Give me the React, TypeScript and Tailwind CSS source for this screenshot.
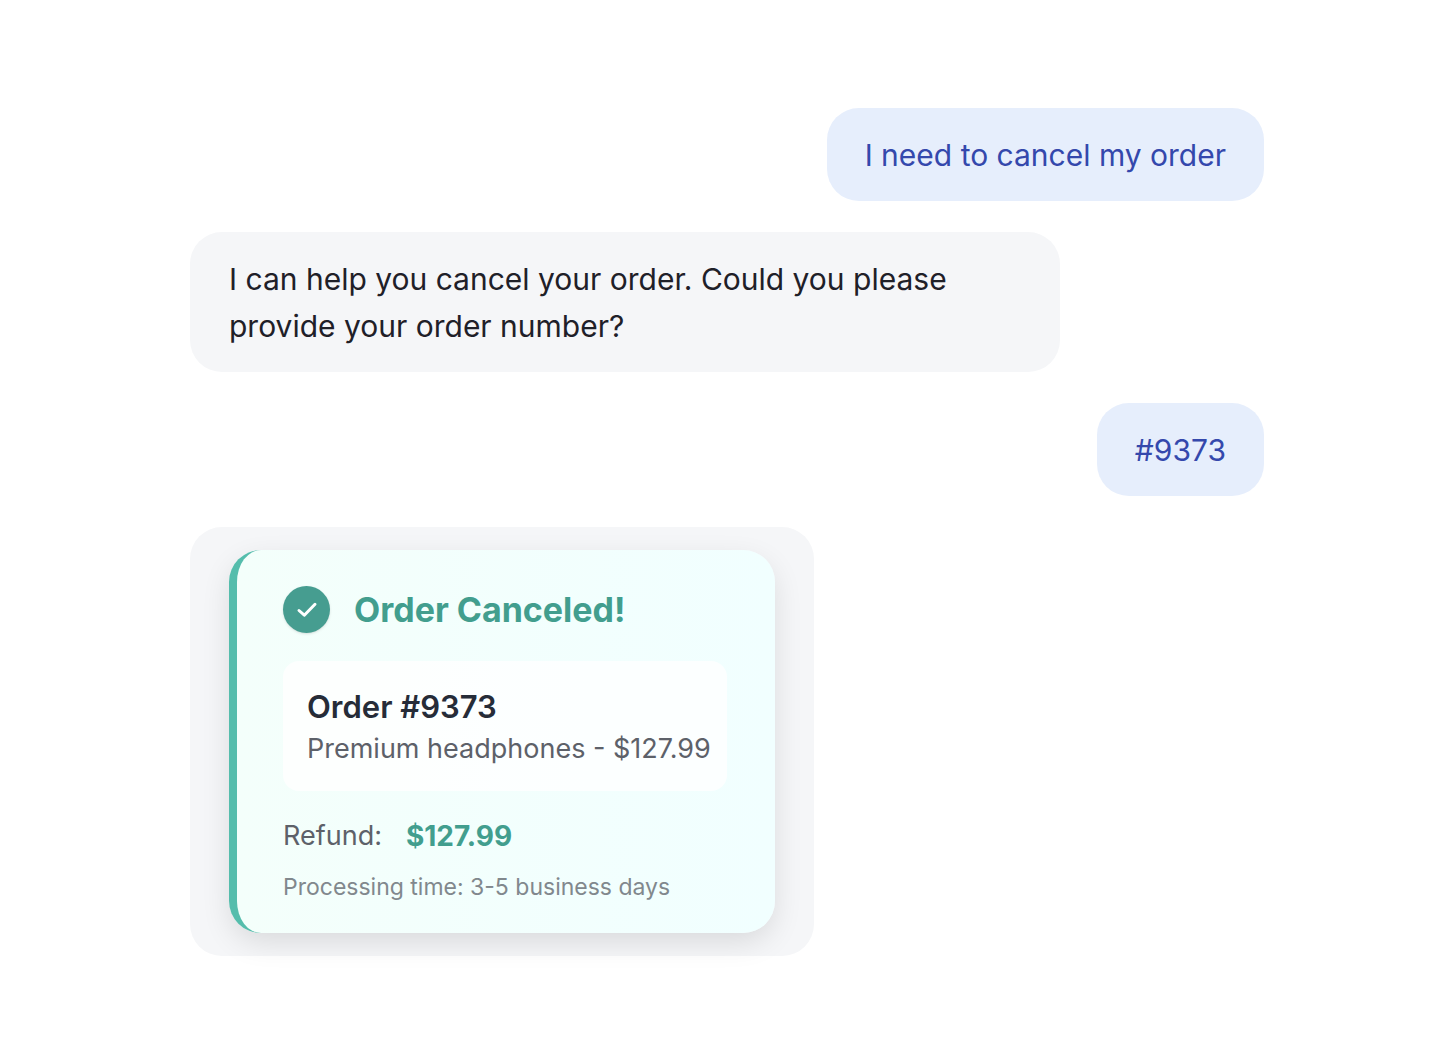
import React from "react";

function UserMessage({ children }: { children: React.ReactNode }) {
  return (
    <div className="self-end rounded-[32px] bg-[#e6eefc] px-[38px] pt-6 pb-[22px] text-[#3448ac]">{children}</div>
  );
}

export default function App() {
  return (
    <main className="min-h-screen bg-white pt-[108px] pr-48 pl-[190px] font-['Inter',sans-serif] text-[30px] leading-[47px] text-[#1f2028]">
      <section className="flex w-full flex-col items-start gap-[31px]">
        <UserMessage>I need to cancel my order</UserMessage>
        <div className="w-[81%] rounded-[32px] bg-[#f5f6f8] px-[39px] pt-6 pb-[22px]">
          I can help you cancel your order. Could you please provide your order number?
        </div>
        <UserMessage>#9373</UserMessage>
        <div className="rounded-[32px] bg-[#f5f6f8] px-[39px] py-[23px]">
          <article className="rounded-[32px] border-l-8 border-[#55bdac] bg-linear-to-r from-[#f4fffb] to-[#f1ffff] pt-9 pr-12 pb-7 pl-[46px] shadow-[0_10px_30px_-2px_rgba(0,0,0,0.12)]">
            <header className="flex items-center gap-6">
              <span className="flex size-[47px] items-center justify-center rounded-full bg-[#469d90] shadow-sm">
                <svg viewBox="0 0 24 24" className="size-6" fill="none" stroke="white" strokeWidth="3" strokeLinecap="round" strokeLinejoin="round" aria-hidden="true">
                  <path d="M4 12.5L9.3 17.2L20 6.3" />
                </svg>
              </span>
              <h2 className="text-[34px] font-bold text-[#429e8e]">Order Canceled!</h2>
            </header>
            <div className="mt-7 rounded-2xl bg-white/80 pt-6 pr-4 pb-[22px] pl-6">
              <h3 className="text-[31px] leading-[44px] font-semibold text-[#262c38]">Order #9373</h3>
              <p className="text-[27px] leading-10 text-[#5d6169]">Premium headphones - $127.99</p>
            </div>
            <p className="mt-6 flex gap-6 text-[27px] leading-[42px] text-[#5d6169]">
              <span>Refund:</span>
              <strong className="text-[28px] font-bold text-[#429e8e]">$127.99</strong>
            </p>
            <p className="mt-3 text-[23px] leading-9 text-[#81888d]">Processing time: 3-5 business days</p>
          </article>
        </div>
      </section>
    </main>
  );
}
